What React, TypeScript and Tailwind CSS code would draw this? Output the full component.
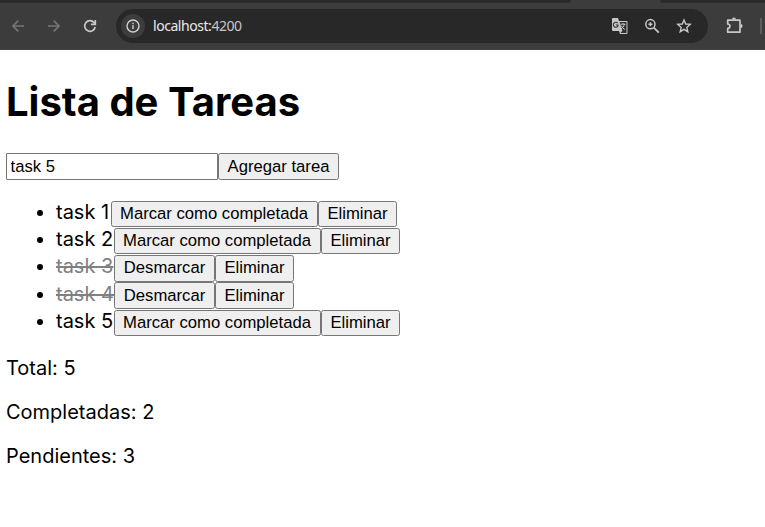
import type { ReactNode } from "react";

type Task = { id: number; name: string; done: boolean; row: string; button: string };

const tasks: Task[] = [
  { id: 1, name: "task 1", done: false, row: "h-[27px]", button: "h-[26px] pb-[1px]" },
  { id: 2, name: "task 2", done: false, row: "h-[27px]", button: "h-[26px] pb-[1px]" },
  { id: 3, name: "task 3", done: true, row: "h-[27px]", button: "h-[27px] pb-[2px]" },
  { id: 4, name: "task 4", done: true, row: "h-[28px]", button: "h-[27px]" },
  { id: 5, name: "task 5", done: false, row: "h-[27px]", button: "h-[26px] pb-[1px]" },
];

function Button({ children, className }: { children: ReactNode; className: string }) {
  return (
    <button
      className={`flex shrink-0 items-center justify-center whitespace-nowrap rounded-[2.5px] border border-[#767676] bg-[#efefef] font-['Liberation_Sans',Arial,sans-serif] text-[16.667px] leading-[19px] text-black ${className}`}
    >
      {children}
    </button>
  );
}

function BrowserBar() {
  return (
    <header className="flex h-[50px] flex-col border-b border-[#493f45] bg-[#3c3c3c]">
      <div className="flex h-[3px] shrink-0 justify-between">
        <div className="w-[571px] rounded-br-[3px] bg-[#2a2a2a]" />
        <div className="w-[105px] rounded-bl-[3px] bg-[#2a2a2a]" />
      </div>
      <div className="flex h-[46px] items-center">
        <svg className="ml-[10px] h-4 w-4 shrink-0" viewBox="0 0 16 16" fill="none" stroke="#747474" strokeWidth="1.6">
          <path d="M14 8H3M8.3 2.6 2.9 8l5.4 5.4" />
        </svg>
        <svg className="ml-[20px] h-4 w-4 shrink-0" viewBox="0 0 16 16" fill="none" stroke="#747474" strokeWidth="1.6">
          <path d="M2 8h11M7.7 2.6 13.1 8l-5.4 5.4" />
        </svg>
        <svg className="ml-[20px] h-4 w-4 shrink-0" viewBox="0 0 16 16" fill="none" stroke="#c7c7c7" strokeWidth="1.7">
          <path d="M13.2 9A5.3 5.3 0 1 1 12.1 4.6L13.3 6" />
          <path d="M13.3 2v4.4H8.9" />
        </svg>
        <div className="ml-[18px] flex h-[34px] w-[592px] shrink-0 items-center rounded-full bg-[#282828] pl-[5px]">
          <div className="flex h-6 w-6 items-center justify-center rounded-full bg-[#3c3c3c]">
            <svg className="h-4 w-4" viewBox="0 0 16 16" fill="none" stroke="#d2d2d2" strokeWidth="1.4">
              <circle cx="8" cy="8" r="6" />
              <path d="M8 7.2V11M8 4.8v1.4" />
            </svg>
          </div>
          <span className="ml-[8px] w-[91px] whitespace-nowrap font-['Noto_Sans','Open_Sans',sans-serif] text-[14px] leading-5 tracking-[-0.45px] text-[#e8e8e8]">
            localhost:<span className="text-[#c5c5c5]">4200</span>
          </span>
          <svg className="ml-[367px] h-[18px] w-[18px] shrink-0" viewBox="0 0 18 18" fill="none">
            <path d="M2 1h5l1 3h7.5q1 0 1 1v11q0 1-1 1H9l-1-3H2q-1 0-1-1V2q0-1 1-1Z" fill="#c7c7c7" />
            <path d="M8.5 5H15.5V16H9.4l2-2.2Z" fill="#303030" />
            <path d="M6.7 6.1A2.5 2.5 0 1 0 7 9V8H4.8" stroke="#303030" strokeWidth="1.1" />
            <path d="M9.5 7.2h5M12 6v1.2M13.6 7.2q-.8 3-3.4 4.7M10.3 8.6q1.2 2.7 3.6 4" stroke="#c7c7c7" strokeWidth="1" />
          </svg>
          <svg className="ml-[15px] h-4 w-4 shrink-0" viewBox="0 0 16 16" fill="none" stroke="#c7c7c7" strokeWidth="1.5">
            <circle cx="6.4" cy="6.2" r="4.6" />
            <path d="m9.8 9.6 5 5" strokeWidth="1.8" />
            <path d="M6.4 4.2v4M4.4 6.2h4" strokeWidth="1.6" />
          </svg>
          <svg className="ml-[16px] h-4 w-4 shrink-0" viewBox="0 0 16 16" fill="none" stroke="#c7c7c7" strokeWidth="1.4">
            <path d="m8 2 1.7 4 4.5.4-3.4 3 1 4.3L8 11.4l-3.8 2.3 1-4.3-3.4-3L6.3 6Z" />
          </svg>
        </div>
        <svg className="ml-[18px] h-[18px] w-[18px] shrink-0" viewBox="0 0 18 18" fill="none">
          <path d="M1.7 3.2H14V15.2H1.7V11.4A2.2 2.2 0 0 0 1.7 7Z" stroke="#c7c7c7" strokeWidth="1.7" strokeLinejoin="round" />
          <path d="M6 2.6a2 2 0 0 1 4 0ZM14.5 7a2.1 2.1 0 0 1 0 4.2Z" fill="#c7c7c7" />
        </svg>
        <div className="ml-[16px] h-4 w-[2px] shrink-0 bg-[#5d5d5d]" />
      </div>
    </header>
  );
}

export default function App() {
  return (
    <div className="h-[527px] w-[765px] overflow-hidden bg-white font-['Inter',sans-serif] text-black">
      <BrowserBar />
      <main className="pl-[6px] text-[20px] leading-[24px]">
        <h1 className="pt-[28px] text-[40px] font-bold leading-[48px]">Lista de Tareas</h1>
        <div className="mt-[27px] flex h-[27px]">
          <input
            className="w-[212px] rounded-[1px] border border-[#767676] bg-white pl-[3.5px] font-['Liberation_Sans',Arial,sans-serif] text-[16.667px] text-black outline-none"
            defaultValue="task 5"
          />
          <Button className="w-[121px]">Agregar tarea</Button>
        </div>
        <ul className="mt-[21px] pl-[50px]">
          {tasks.map((task) => (
            <li key={task.id} className={`flex ${task.row}`}>
              <span className={`-ml-[19px] mr-[13px] h-[6px] w-[6px] shrink-0 rounded-full bg-black ${task.id === 4 ? "mt-[10px]" : "mt-[9px]"}`} />
              <span className={`${task.id === 4 ? "leading-[25px]" : "leading-[23px]"} ${task.id === 1 ? "w-[55px]" : "w-[58px]"} whitespace-nowrap ${task.done ? "text-[#808080] line-through" : ""}`}>
                {task.name}
              </span>
              <Button className={`${task.done ? "w-[101px]" : "w-[207px] pr-[1px]"} ${task.button}`}>
                {task.done ? "Desmarcar" : "Marcar como completada"}
              </Button>
              <Button className={`w-[79px] ${task.button}`}>Eliminar</Button>
            </li>
          ))}
        </ul>
        <section className="mt-[19px] flex flex-col gap-[20px]">
          <p>Total: 5</p>
          <p>Completadas: 2</p>
          <p>Pendientes: 3</p>
        </section>
      </main>
    </div>
  );
}
